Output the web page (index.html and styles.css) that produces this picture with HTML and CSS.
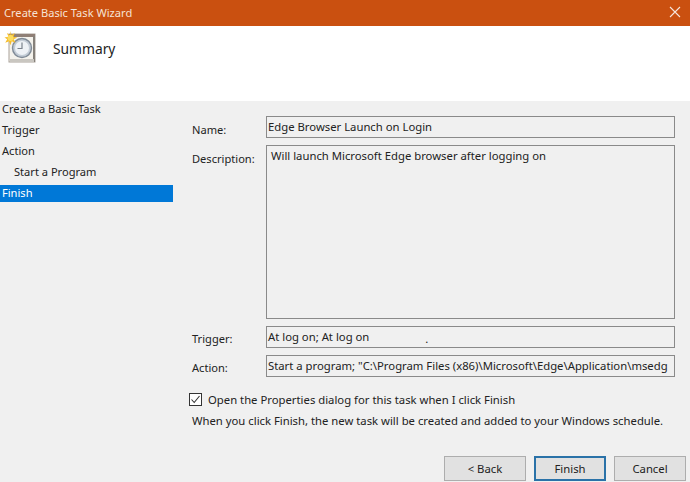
FILE: index.html
```html
<!DOCTYPE html>
<html lang="en">
<head>
<meta charset="utf-8">
<title>Create Basic Task Wizard</title>
<link rel="stylesheet" href="styles.css">
</head>
<body>
<div class="window">
  <header class="titlebar">
    <span class="title">Create Basic Task Wizard</span>
    <svg class="close" width="12" height="12" viewBox="0 0 12 12"><path d="M1 1L11 11M11 1L1 11" stroke="#f6e6dc" stroke-width="1.1" fill="none"/></svg>
  </header>
  <section class="banner">
    <svg class="task-icon" width="34" height="36" viewBox="0 0 34 36">
      <rect x="7" y="4" width="26" height="28" fill="#f4f2ec" stroke="#a9a29a"/>
      <rect x="7" y="4" width="26" height="3" fill="#8f7f76"/>
      <rect x="31" y="6" width="2" height="26" fill="#85807a"/>
      <rect x="8" y="29" width="24" height="3" fill="#c9c6c0"/>
      <circle cx="20" cy="18" r="9.5" fill="#c3ccd6" stroke="#7f8a96" stroke-width="1.4"/>
      <circle cx="20" cy="18" r="7" fill="#eef2f6"/>
      <path d="M20 12.5V18.5H15.5" stroke="#7a828c" stroke-width="1.2" fill="none"/>
      <path d="M8.5 1l1 4 3.4-2-1.6 3.7 4 .8-3.7 1.7 2 3.5-3.9-1.4-1.3 4-1.4-4-3.8 1.4 2-3.5L2.5 7.5l4-.8-1.6-3.7 3.4 2z" fill="#f6bd2c"/>
      <circle cx="8.5" cy="8" r="3" fill="#fbdc62"/>
    </svg>
    <h1 class="heading">Summary</h1>
  </section>
  <div class="content">
    <nav class="steps">
      <div class="step">Create a Basic Task</div>
      <div class="step">Trigger</div>
      <div class="step">Action</div>
      <div class="step sub">Start a Program</div>
      <div class="step current"><span>Finish</span></div>
    </nav>
    <main class="panel">
      <div class="form">
        <label class="lbl">Name:</label>
        <div class="box">Edge Browser Launch on Login</div>
        <label class="lbl">Description:</label>
        <div class="box desc">Will launch Microsoft Edge browser after logging on</div>
        <label class="lbl low">Trigger:</label>
        <div class="box">At log on; At log on<span class="speck">.</span></div>
        <label class="lbl low">Action:</label>
        <div class="box">Start a program; "C:\Program Files (x86)\Microsoft\Edge\Application\msedg</div>
      </div>
      <div class="check-row">
        <span class="checkbox"><svg width="13" height="13" viewBox="0 0 13 13"><path d="M2.5 6.5L5.2 9.5L10.5 3" stroke="#333" stroke-width="1.1" fill="none"/></svg></span>
        <span>Open the Properties dialog for this task when I click Finish</span>
      </div>
      <p class="note">When you click Finish, the new task will be created and added to your Windows schedule.</p>
    </main>
  </div>
  <footer class="buttons">
    <button class="btn back">&lt; Back</button>
    <button class="btn primary">Finish</button>
    <button class="btn cancel">Cancel</button>
  </footer>
</div>
</body>
</html>
```
FILE: styles.css
```css
* { box-sizing: border-box; }
html, body { margin: 0; padding: 0; }
body {
  width: 690px;
  height: 482px;
  overflow: hidden;
  font-family: "Noto Sans", "Open Sans", sans-serif;
  font-size: 11.3px;
  color: #222;
  background: #f0f0f0;
}
.window { display: flex; flex-direction: column; height: 482px; }
.titlebar {
  height: 26px;
  flex: none;
  background: #ca5010;
  color: #f6e3d6;
  display: flex;
  align-items: center;
  justify-content: space-between;
  padding: 0 9px 2px 4px;
  font-size: 11.1px;
}
.banner {
  height: 75px;
  flex: none;
  background: #fff;
  display: flex;
  align-items: flex-start;
  padding: 4px 0 0 2px;
}
.heading {
  margin: 9px 0 0 17px;
  font-size: 13.8px;
  font-weight: 400;
  color: #222;
}
.content { display: flex; flex: none; height: 352px; }
.steps { width: 173px; flex: none; display: flex; flex-direction: column; font-size: 11.1px; }
.step { height: 21px; line-height: 15px; padding: 0 0 0 2px; }
.step.sub { padding-left: 14px; }
.step.current {
  background: linear-gradient(#0078d7, #0078d7) 0 0 / 100% 17px no-repeat;
  line-height: 16px;
  color: #fff;
}
.panel { flex: 1; padding: 15px 15px 0 19px; }
.form {
  display: grid;
  grid-template-columns: 74px 409px;
  grid-template-rows: 22px 174px 22px 22px;
  row-gap: 7px;
}
.lbl { padding-top: 6px; line-height: 16px; font-size: 11.1px; }
.lbl.low { padding-top: 5px; }
.box {
  border: 1px solid #8a8a8a;
  padding: 2px 0 0 1px;
  line-height: 16px;
  white-space: nowrap;
  overflow: hidden;
}
.box.desc { padding: 2px 0 0 4px; }
.speck { margin-left: 56px; vertical-align: -2px; }
.check-row {
  display: flex;
  align-items: center;
  gap: 6px;
  margin-top: 14px;
  margin-left: -3px;
  height: 16px;
}
.checkbox {
  width: 13px;
  height: 13px;
  border: 1px solid #333;
  background: #fff;
  display: flex;
}
.checkbox svg { margin: -1px; flex: none; }
.note { margin: 6px 0 0; line-height: 16px; white-space: nowrap; }
.buttons {
  flex: 1;
  display: flex;
  justify-content: flex-end;
  gap: 8px;
  padding: 3px 4px 4px 0;
}
.btn {
  height: 25px;
  font: inherit;
  color: #222;
  background: #e1e1e1;
  border: 1px solid #adadad;
  padding: 0;
}
.back { width: 82px; }
.primary { width: 72px; border: 2px solid #2a72a8; }
.cancel { width: 72px; }
```
